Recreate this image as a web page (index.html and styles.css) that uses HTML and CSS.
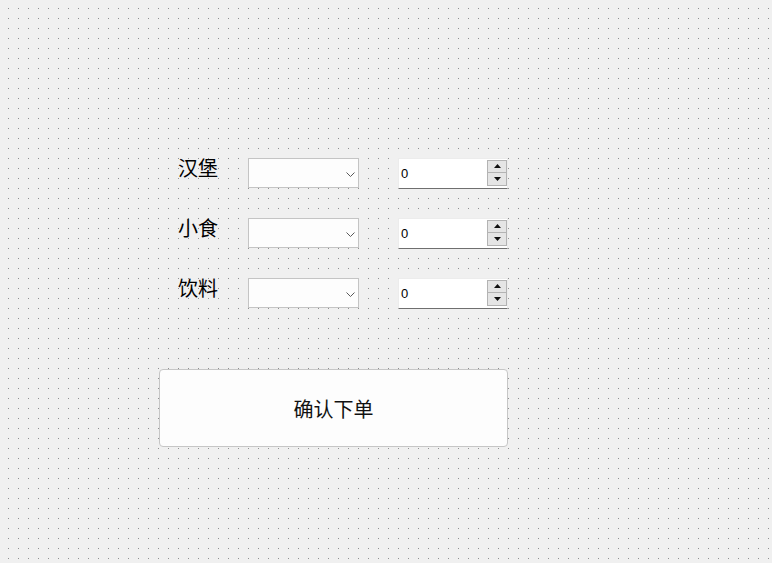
FILE: index.html
```html
<!DOCTYPE html>
<html lang="zh">
<head>
<meta charset="utf-8">
<link rel="stylesheet" href="styles.css">
</head>
<body>
<div class="form">
  <div class="grid">
    <div class="label">汉堡</div>
    <div class="combo"><svg class="chev" width="9" height="5" viewBox="0 0 9 5"><path d="M0.5 0.5 L4.5 4.5 L8.5 0.5" fill="none" stroke="#5a5a5a" stroke-width="1"/></svg></div>
    <div class="spin"><span class="val">0</span><div class="btns"><div class="sb"><svg width="7" height="4" viewBox="0 0 7 4"><path d="M3.5 0 L7 4 L0 4 Z" fill="#111"/></svg></div><div class="sb"><svg width="7" height="4" viewBox="0 0 7 4"><path d="M0 0 L7 0 L3.5 4 Z" fill="#111"/></svg></div></div></div>

    <div class="label">小食</div>
    <div class="combo"><svg class="chev" width="9" height="5" viewBox="0 0 9 5"><path d="M0.5 0.5 L4.5 4.5 L8.5 0.5" fill="none" stroke="#5a5a5a" stroke-width="1"/></svg></div>
    <div class="spin"><span class="val">0</span><div class="btns"><div class="sb"><svg width="7" height="4" viewBox="0 0 7 4"><path d="M3.5 0 L7 4 L0 4 Z" fill="#111"/></svg></div><div class="sb"><svg width="7" height="4" viewBox="0 0 7 4"><path d="M0 0 L7 0 L3.5 4 Z" fill="#111"/></svg></div></div></div>

    <div class="label">饮料</div>
    <div class="combo"><svg class="chev" width="9" height="5" viewBox="0 0 9 5"><path d="M0.5 0.5 L4.5 4.5 L8.5 0.5" fill="none" stroke="#5a5a5a" stroke-width="1"/></svg></div>
    <div class="spin"><span class="val">0</span><div class="btns"><div class="sb"><svg width="7" height="4" viewBox="0 0 7 4"><path d="M3.5 0 L7 4 L0 4 Z" fill="#111"/></svg></div><div class="sb"><svg width="7" height="4" viewBox="0 0 7 4"><path d="M0 0 L7 0 L3.5 4 Z" fill="#111"/></svg></div></div></div>
  </div>
  <div class="submit">确认下单</div>
</div>
</body>
</html>
```
FILE: styles.css
```css
html, body {
  margin: 0;
  padding: 0;
}
body {
  width: 772px;
  height: 563px;
  overflow: hidden;
  background-color: #f0f0f0;
  background-image: conic-gradient(from 270deg at 1px 1px, #8f8f8f 90deg, transparent 0);
  background-size: 10px 10px;
  background-position: 8px 8px;
  font-family: "Noto Sans CJK SC", "Noto Sans", sans-serif;
  color: #000;
}
.form {
  padding: 158px 0 0 159px;
}
.grid {
  margin-left: 19px;
  display: grid;
  grid-template-columns: 70px 150px 110px;
  grid-auto-rows: 30px;
  row-gap: 30px;
}
.label {
  font-size: 20px;
  line-height: 22px;
  align-self: start;
  margin-top: -1px;
}
.combo {
  width: 111px;
  height: 30px;
  box-sizing: border-box;
  border: 1px solid #c4c4c4;
  background: #fdfdfd;
  position: relative;
}
.chev {
  position: absolute;
  left: 97px;
  top: 13px;
}
.spin {
  width: 110px;
  height: 31px;
  box-sizing: border-box;
  background: #fff;
  border: 1px solid #ececec;
  border-bottom: 1px solid #6f6f6f;
  display: flex;
  align-items: center;
  justify-content: space-between;
}
.val {
  font-family: "Liberation Sans", Arial, sans-serif;
  font-size: 13px;
  margin-left: 2px;
}
.btns {
  display: flex;
  flex-direction: column;
  margin-top: -2px;
}
.sb {
  width: 20px;
  height: 13px;
  box-sizing: border-box;
  background: #e5e5e5;
  border: 1px solid #b3b3b3;
  display: flex;
  align-items: center;
  justify-content: center;
}
.sb + .sb {
  border-top: none;
}
.submit {
  margin-top: 61px;
  width: 349px;
  height: 78px;
  box-sizing: border-box;
  border: 1px solid #c6c6c6;
  border-radius: 4px;
  background: #fdfdfd;
  display: flex;
  align-items: center;
  justify-content: center;
  font-size: 20px;
  color: #111;
  padding-top: 1px;
}
```
